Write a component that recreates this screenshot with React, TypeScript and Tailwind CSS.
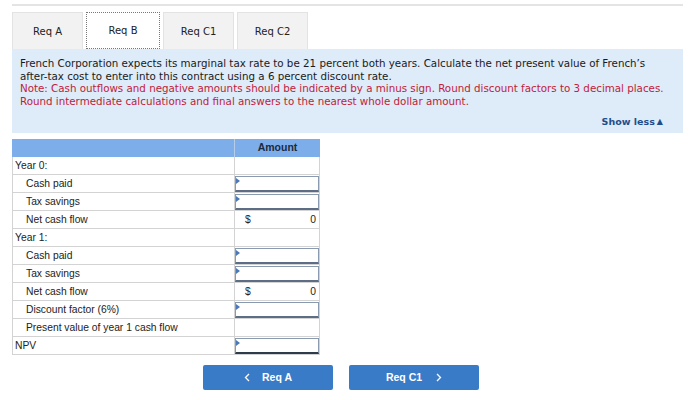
import React from "react";

type Row = {
  label: string;
  indent?: boolean;
  kind: "none" | "input" | "value";
  value?: string;
  bottom?: boolean;
};

const rows: Row[] = [
  { label: "Year 0:", kind: "none" },
  { label: "Cash paid", indent: true, kind: "input" },
  { label: "Tax savings", indent: true, kind: "input" },
  { label: "Net cash flow", indent: true, kind: "value", value: "0" },
  { label: "Year 1:", kind: "none" },
  { label: "Cash paid", indent: true, kind: "input" },
  { label: "Tax savings", indent: true, kind: "input" },
  { label: "Net cash flow", indent: true, kind: "value", value: "0" },
  { label: "Discount factor (6%)", indent: true, kind: "input" },
  { label: "Present value of year 1 cash flow", indent: true, kind: "none" },
  { label: "NPV", kind: "input", bottom: true },
];

function InputCell({ strong }: { strong?: boolean }) {
  return (
    <div
      className={`relative h-full w-full border border-[#8a9ab0] bg-white ${
        strong ? "border-b-[2px] border-b-[#2f3a4a]" : "border-b-[2px] border-b-[#5d6d85]"
      }`}
    >
      <span className="absolute left-0 top-[1px] h-0 w-0 border-y-[3px] border-l-[4px] border-y-transparent border-l-[#4a78b8]" />
    </div>
  );
}

function Chevron({ dir }: { dir: "left" | "right" }) {
  return (
    <svg width="6" height="9" viewBox="0 0 6 9" className="shrink-0">
      <path
        d={dir === "left" ? "M5 1 L1.5 4.5 L5 8" : "M1 1 L4.5 4.5 L1 8"}
        fill="none"
        stroke="white"
        strokeWidth="1.3"
      />
    </svg>
  );
}

export default function App() {
  const tabs = ["Req A", "Req B", "Req C1", "Req C2"];

  return (
    <div className="relative h-[400px] w-[700px] overflow-hidden bg-white px-[12px] pt-[4px]">
      <div className="h-[2px] w-[671px] bg-[#e4e4e4]" />

      {/* tabs */}
      <div className="mt-[6px] flex gap-[3px] font-['DejaVu_Sans',Verdana,sans-serif] text-[10px] text-[#222]">
        {tabs.map((t) =>
          t === "Req B" ? (
            <div
              key={t}
              className="flex h-[37px] w-[74px] items-center justify-center border border-dotted border-[#777] bg-white"
            >
              {t}
            </div>
          ) : (
            <div
              key={t}
              className="flex h-[37px] w-[71px] items-center justify-center border border-[#e3e3e3] border-b-0 bg-[#f2f2f2]"
            >
              {t}
            </div>
          )
        )}
      </div>

      {/* info box */}
      <div className="h-[84px] w-[671px] bg-[#deebf8] px-[8px] pt-[8px] font-['DejaVu_Sans',Verdana,sans-serif] text-[10.3px] leading-[12.5px] text-[#1a1a1a]">
        <p>
          French Corporation expects its marginal tax rate to be 21 percent both years. Calculate the net present value of French’s
          after-tax cost to enter into this contract using a 6 percent discount rate.
        </p>
        <p className="text-[#c0213a]">
          Note: Cash outflows and negative amounts should be indicated by a minus sign. Round discount factors to 3 decimal places.
          Round intermediate calculations and final answers to the nearest whole dollar amount.
        </p>
        <div className="mt-[9px] flex justify-end pr-[12px] text-[9.5px] font-bold text-[#1f4e8c]">
          Show less<span className="ml-[2px] text-[8px]">▲</span>
        </div>
      </div>

      {/* table */}
      <div className="mt-[6px] w-[308px] font-['Liberation_Sans',Arial,sans-serif] text-[10.3px] text-[#222]">
        <div className="flex h-[18px] bg-[#7eaeea]">
          <div className="w-[222px]" />
          <div className="flex w-[86px] items-center justify-center border-l border-[#b5cdeb] text-[10.5px] font-bold text-[#1b2a3e]">
            Amount
          </div>
        </div>
        {rows.map((r, i) => (
          <div key={i} className="flex h-[18px] border-b border-[#d3d3d3]">
            <div
              className={`flex w-[222px] items-center border-l border-[#d3d3d3] ${
                r.indent ? "pl-[13px]" : "pl-[2px]"
              }`}
            >
              {r.label}
            </div>
            <div className="flex w-[86px] items-stretch border-x border-[#d3d3d3] pt-[1px]">
              {r.kind === "input" && <InputCell strong={r.bottom} />}
              {r.kind === "value" && (
                <div className="flex w-full items-center justify-between pl-[10px] pr-[3px]">
                  <span>$</span>
                  <span>{r.value}</span>
                </div>
              )}
            </div>
          </div>
        ))}
      </div>

      {/* nav buttons */}
      <div className="mt-[10px] flex gap-[16px] pl-[191px] font-['Liberation_Sans',Arial,sans-serif] text-[10.5px] font-bold text-white">
        <div className="flex h-[25px] w-[130px] items-center justify-center gap-[12px] rounded-[2px] bg-[#3a7bc8]">
          <Chevron dir="left" />
          <span>Req A</span>
        </div>
        <div className="flex h-[25px] w-[130px] items-center justify-center gap-[14px] rounded-[2px] bg-[#3a7bc8]">
          <span>Req C1</span>
          <Chevron dir="right" />
        </div>
      </div>
    </div>
  );
}
